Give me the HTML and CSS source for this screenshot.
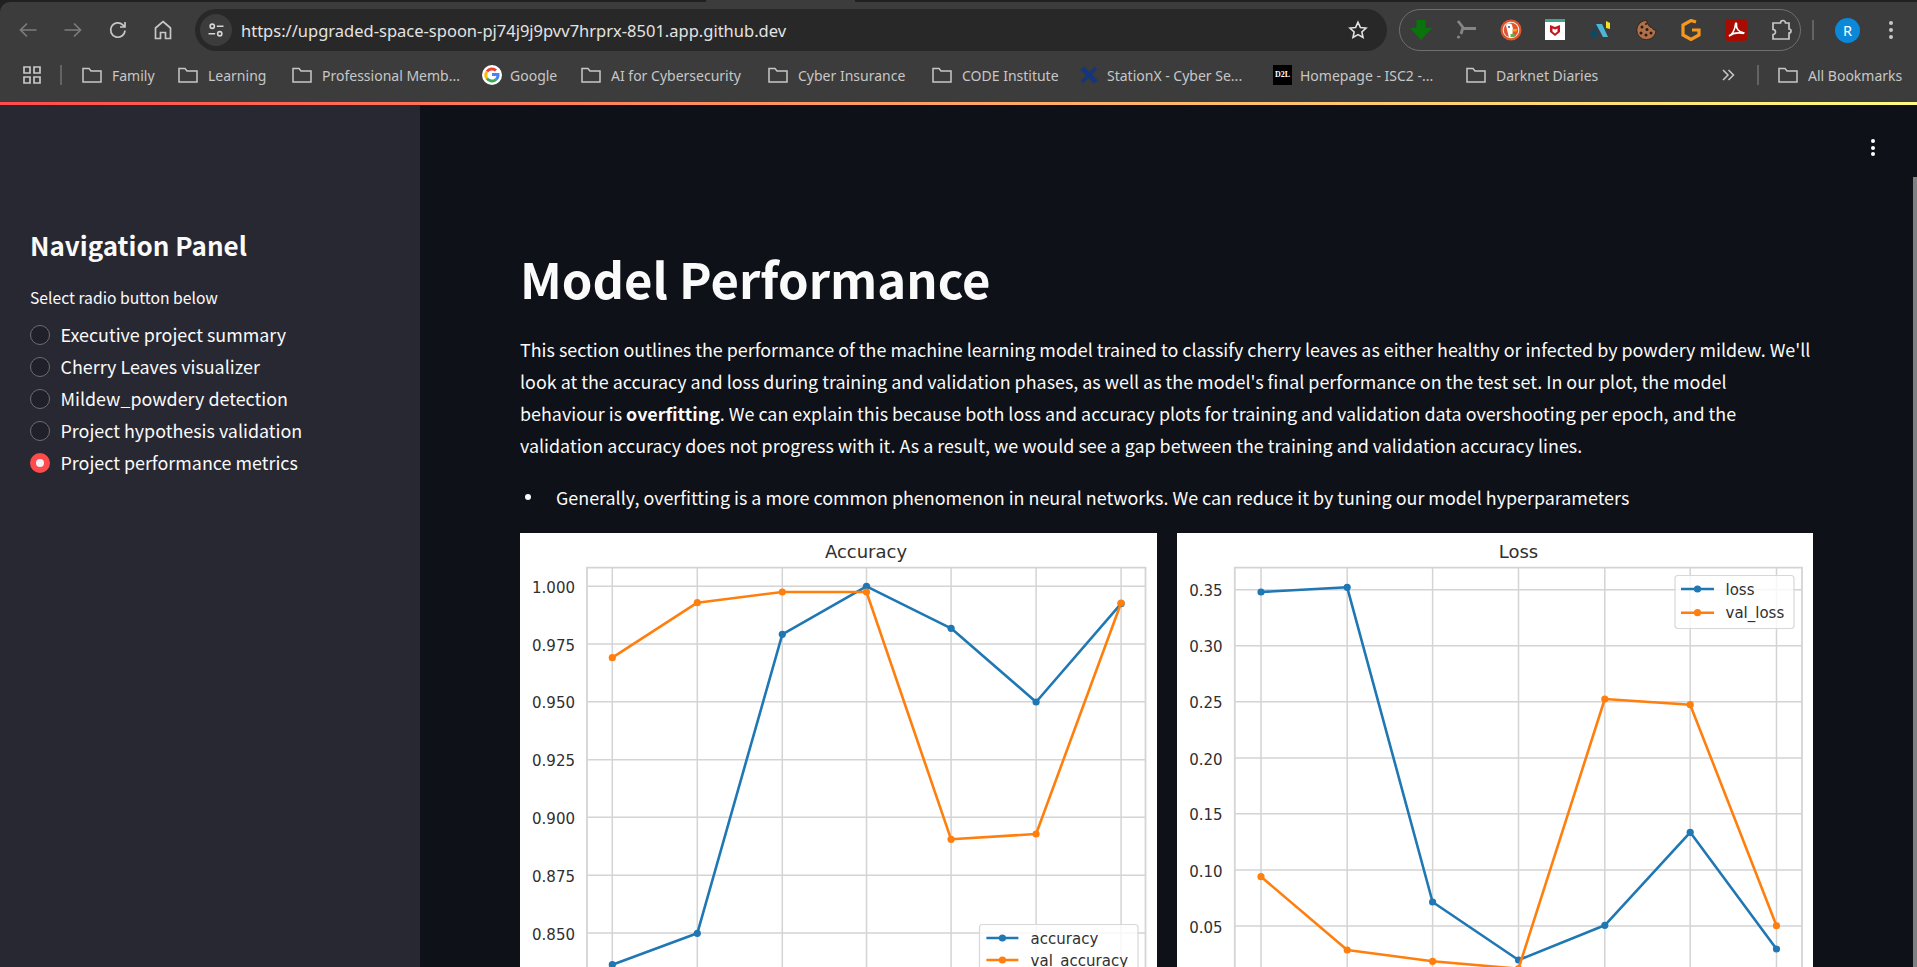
FILE: index.html
```html
<!DOCTYPE html>
<html lang="en">
<head>
	<meta charset="UTF-8">
	<title>Model Performance</title>
	<link rel="stylesheet" href="styles.css">
</head>
<body>
	<svg class="defs" width="0" height="0">
		<defs>
			<marker id="dotBlue" markerUnits="userSpaceOnUse" markerWidth="10" markerHeight="10" refX="5" refY="5"><circle cx="5" cy="5" r="3.6" fill="#1f77b4"/></marker>
			<marker id="dotOrange" markerUnits="userSpaceOnUse" markerWidth="10" markerHeight="10" refX="5" refY="5"><circle cx="5" cy="5" r="3.6" fill="#ff7f0e"/></marker>
		</defs>
	</svg>

	<div class="chrome">
		<div class="toolbar">
			<button class="navBtn dim"><svg viewBox="0 0 24 24"><path d="M20.5 12H4.5M11 5.5 4.5 12l6.5 6.5"/></svg></button>
			<button class="navBtn dim"><svg viewBox="0 0 24 24"><path d="M3.5 12h16M13 5.5l6.5 6.5-6.5 6.5"/></svg></button>
			<button class="navBtn"><svg viewBox="0 0 24 24"><path d="M19 12.5a7.2 7.2 0 1 1-2.2-5.7L19 9M19 4v5h-5"/></svg></button>
			<button class="navBtn"><svg viewBox="0 0 24 24"><path d="M12 3.5 19.5 10v10.5h-5v-6h-5v6h-5V10z"/></svg></button>
			<div class="omnibox">
				<div class="siteInfo"><svg viewBox="0 0 24 24"><circle cx="7.5" cy="7.5" r="2.5"/><path d="M13 7.5h8M3 16.500h8"/><circle cx="16.500" cy="16.500" r="2.500"/></svg></div>
				<div class="url">https://upgraded-space-spoon-pj74j9j9pvv7hrprx-8501.app.github.dev</div>
				<svg class="star" viewBox="0 0 24 24"><path d="M12 3.500l2.600 5.700 6.200.7-4.600 4.200 1.300 6.100-5.500-3.100-5.500 3.100 1.300-6.100-4.600-4.200 6.200-.7z"/></svg>
			</div>
			<div class="extensions">
				<svg viewBox="0 0 22 22"><path fill="#0b730b" d="M6.500 1h9v8H22L11 21 0 9h6.500z"/></svg>
				<svg viewBox="0 0 22 22"><path fill="none" stroke="#858585" stroke-width="2.800" d="M3 2l5 6.500L6 15M7.500 9.500H21"/><circle cx="3.500" cy="18" r="1.600" fill="#858585"/></svg>
				<svg viewBox="0 0 22 22"><circle cx="11" cy="11" r="10.500" fill="#e2562b"/><circle cx="11" cy="11" r="8.300" fill="#f4f4f4"/><circle cx="11" cy="11" r="7.300" fill="#e2562b"/><path fill="#fff" d="M6 6.500C7 4 11 4 12 6l1 4-1 8.500H9z"/><path fill="#f7a21b" d="M12.500 10h5l-1 2.500h-4z"/><path fill="#55b848" d="M10.500 15h4v3h-4z"/><circle cx="9" cy="8" r="1" fill="#2d4f8e"/></svg>
				<svg viewBox="0 0 22 22"><path fill="#fff" d="M0 1h20v20H0z"/><path fill="#3fa58c" d="M0 0h20v3H0z"/><path fill="#c4141c" d="M5 6l5 2 5-2v7l-5 4-5-4z"/><path fill="#fff" d="M7.500 9.500l2.500 1 2.500-1v3l-2.500 2-2.500-2z"/></svg>
				<svg viewBox="0 0 22 22"><circle cx="4" cy="15" r="3.500" fill="#0e4a66"/><path fill="#0e4a66" d="M2 11l5-4v4z"/><path fill="#4eb4d8" d="M6 5h6l6 13h-5z"/><path fill="#f5e020" d="M16 2l4 2v6l-4-1z"/></svg>
				<svg viewBox="0 0 22 22"><path fill="#b0704a" stroke="#2c1c14" stroke-width=".8" d="M12 1.500a9.600 9.600 0 1 0 9 9.500c-2 .5-3.500-.5-3.800-2.500-2 0-3.800-1-3.700-3-1.300 0-2-2-1.500-4z"/><g fill="#2a1a12"><circle cx="7" cy="8" r="1.500"/><circle cx="12" cy="10.500" r="1.500"/><circle cx="6" cy="14" r="1.500"/><circle cx="11" cy="16" r="1.500"/><circle cx="16" cy="14" r="1.500"/><circle cx="11" cy="5" r="1"/></g></svg>
				<svg viewBox="0 0 22 22"><path fill="none" stroke="#f7971e" stroke-width="3.200" d="M16 3l-5-1.500L3 6v10l8 4.500 8-4.500v-5h-7"/></svg>
				<svg viewBox="0 0 22 22"><rect width="22" height="22" rx="3" fill="#a80b00"/><path fill="none" stroke="#fff" stroke-width="1.600" d="M4 17c3-1 6-6 6.500-12 .1-1.500 1.500-1 1 1C11 10 14 13 18 13.500c1.500 0 1 1.200-1 .8C13 13.500 8 14 4 17z"/></svg>
				<svg viewBox="0 0 22 22"><path fill="none" stroke="#c7c7c7" stroke-width="1.700" d="M8 4h2.500a2.500 2.500 0 0 1 5 0H19v6a2 2 0 0 1 0 4v6H3v-4.500a2.500 2.500 0 0 0 0-5V4z"/></svg>
			</div>
			<div class="vsep"></div>
			<div class="avatar">R</div>
			<div class="moreDots"><i></i><i></i><i></i></div>
		</div>

		<div class="bookmarks">
			<div class="bmStart">
				<svg class="bmIcon" viewBox="0 0 20 20"><path fill="none" stroke="#c7c7c7" stroke-width="1.700" d="M2 2h6v6H2zM12 2h6v6h-6zM2 12h6v6H2zM12 12h6v6h-6z"/></svg>
				<div class="vsep"></div>
			</div>
			<div class="bm"><svg class="folder" viewBox="0 0 20 20"><path d="M1 3.500h6l2 2.500h10v11H1z"/></svg><span>Family</span></div>
			<div class="bm"><svg class="folder" viewBox="0 0 20 20"><path d="M1 3.500h6l2 2.500h10v11H1z"/></svg><span>Learning</span></div>
			<div class="bm"><svg class="folder" viewBox="0 0 20 20"><path d="M1 3.500h6l2 2.500h10v11H1z"/></svg><span>Professional Memb...</span></div>
			<div class="bm"><svg class="bmIcon" viewBox="0 0 20 20"><circle cx="10" cy="10" r="10" fill="#fff"/><g fill="none" stroke-width="3"><path stroke="#ea4335" d="M5 6.500a6 6 0 0 1 9-1"/><path stroke="#fbbc05" d="M5 6.500a6 6 0 0 0 0 7"/><path stroke="#34a853" d="M5 13.500a6 6 0 0 0 9 1"/><path stroke="#4285f4" d="M14 14.500a6 6 0 0 0 2-5H10"/></g></svg><span>Google</span></div>
			<div class="bm"><svg class="folder" viewBox="0 0 20 20"><path d="M1 3.500h6l2 2.500h10v11H1z"/></svg><span>AI for Cybersecurity</span></div>
			<div class="bm"><svg class="folder" viewBox="0 0 20 20"><path d="M1 3.500h6l2 2.500h10v11H1z"/></svg><span>Cyber Insurance</span></div>
			<div class="bm"><svg class="folder" viewBox="0 0 20 20"><path d="M1 3.500h6l2 2.500h10v11H1z"/></svg><span>CODE Institute</span></div>
			<div class="bm"><svg class="bmIcon" viewBox="0 0 20 20"><path stroke="#16357f" stroke-width="5" d="M3 3l14 14"/><path stroke="#16357f" stroke-width="3.500" d="M17 3L3 17"/></svg><span>StationX - Cyber Se...</span></div>
			<div class="bm"><div class="d2l">D2L</div><span>Homepage - ISC2 -...</span></div>
			<div class="bm"><svg class="folder" viewBox="0 0 20 20"><path d="M1 3.500h6l2 2.500h10v11H1z"/></svg><span>Darknet Diaries</span></div>
			<div class="bmEnd">
				<svg class="chevrons" viewBox="0 0 14 14"><path d="M2 2l5 5-5 5M7.500 2l5 5-5 5"/></svg>
				<div class="vsep"></div>
				<div class="bm"><svg class="folder" viewBox="0 0 20 20"><path d="M1 3.500h6l2 2.500h10v11H1z"/></svg><span>All Bookmarks</span></div>
			</div>
		</div>
	</div>

	<div class="decoracion"></div>

	<div class="app">
		<div class="sidebar">
			<div class="tituloPanel">Navigation Panel</div>
			<div class="radioLabel">Select radio button below</div>
			<div class="radios">
				<div class="radio"><span class="circulo"></span>Executive project summary</div>
				<div class="radio"><span class="circulo"></span>Cherry Leaves visualizer</div>
				<div class="radio"><span class="circulo"></span>Mildew_powdery detection</div>
				<div class="radio"><span class="circulo"></span>Project hypothesis validation</div>
				<div class="radio"><span class="circulo activo"></span>Project performance metrics</div>
			</div>
		</div>

		<div class="principal">
			<h1>Model Performance</h1>
			<p class="parrafo">This section outlines the performance of the machine learning model trained to classify cherry leaves as either healthy or infected by powdery mildew. We'll look at the accuracy and loss during training and validation phases, as well as the model's final performance on the test set. In our plot, the model behaviour is <b>overfitting</b>. We can explain this because both loss and accuracy plots for training and validation data overshooting per epoch, and the validation accuracy does not progress with it. As a result, we would see a gap between the training and validation accuracy lines.</p>
			<ul class="lista">
				<li>Generally, overfitting is a more common phenomenon in neural networks. We can reduce it by tuning our model hyperparameters</li>
			</ul>
			<div class="graficos">
				<svg class="grafico" viewBox="0 0 637 434">
					<text class="tituloGrafico" x="346" y="25">Accuracy</text>
					<path class="rejilla" d="M92.300 34.700V434M177.300 34.700V434M262.300 34.700V434M346.500 34.700V434M431.100 34.700V434M516.100 34.700V434M601.100 34.700V434M67 53.300H625.500M67 111H625.500M67 168.700H625.500M67 226.700H625.500M67 284.300H625.500M67 342.300H625.500M67 400H625.500"/>
					<path class="marco" d="M67 434V34.700H625.500V434"/>
					<g class="ticks">
						<text x="55" y="60">1.000</text><text x="55" y="117.500">0.975</text><text x="55" y="175">0.950</text><text x="55" y="233">0.925</text><text x="55" y="291">0.900</text><text x="55" y="349">0.875</text><text x="55" y="406.500">0.850</text>
					</g>
					<polyline class="serieAzul" points="92.300,431.700 177.300,400.300 262.300,101.300 346.500,53.300 431.100,95.300 516.100,169 601.100,70.700"/>
					<polyline class="serieNaranja" points="92.300,124.700 177.300,69.700 262.300,59 346.500,59 431.100,306.300 516.100,301 601.100,70"/>
					<rect class="leyenda" x="459.500" y="391.500" width="158.500" height="60" rx="3"/>
					<polyline class="serieAzul manija" points="466.400,405 482.400,405 498.400,405"/>
					<polyline class="serieNaranja manija" points="466.400,427 482.400,427 498.400,427"/>
					<text class="textoLeyenda" x="510.600" y="411">accuracy</text>
					<text class="textoLeyenda" x="510.600" y="433">val_accuracy</text>
				</svg>
				<svg class="grafico" viewBox="0 0 636 434">
					<text class="tituloGrafico" x="341.500" y="25">Loss</text>
					<path class="rejilla" d="M84 34.700V434M170.200 34.700V434M255.600 34.700V434M341.500 34.700V434M427.800 34.700V434M513.200 34.700V434M599.500 34.700V434M57.800 56.700H625M57.800 112.700H625M57.800 168.700H625M57.800 225H625M57.800 280.700H625M57.800 337H625M57.800 393H625"/>
					<path class="marco" d="M57.800 434V34.700H625V434"/>
					<g class="ticks">
						<text x="45.600" y="63">0.35</text><text x="45.600" y="119">0.30</text><text x="45.600" y="175">0.25</text><text x="45.600" y="231.500">0.20</text><text x="45.600" y="287">0.15</text><text x="45.600" y="343.500">0.10</text><text x="45.600" y="399.500">0.05</text>
					</g>
					<polyline class="serieAzul" points="84,59 170.200,54.300 255.600,369 341.500,427 427.800,392.300 513.200,299.300 599.500,416"/>
					<polyline class="serieNaranja" points="84,343.700 170.200,417 255.600,428.300 341.500,435.700 427.800,166 513.200,171.700 599.500,392.700"/>
					<rect class="leyenda" x="498" y="42.500" width="119" height="53" rx="3"/>
					<polyline class="serieAzul manija" points="504,56 520.500,56 537,56"/>
					<polyline class="serieNaranja manija" points="504,79.700 520.500,79.700 537,79.700"/>
					<text class="textoLeyenda" x="548.500" y="62">loss</text>
					<text class="textoLeyenda" x="548.500" y="85">val_loss</text>
				</svg>
			</div>
		</div>
	</div>

	<div class="menuApp"><i></i><i></i><i></i></div>
	<div class="scrollbar"></div>
</body>
</html>
```

FILE: styles.css
```css
html, body {
	margin: 0;
	height: 100%;
	overflow: hidden;
	background: #0e1117;
}
body {
	display: flex;
	flex-direction: column;
	font-family: "Noto Sans CJK SC", "Noto Sans", sans-serif;
	color: #fafafa;
}
svg.defs {
	position: absolute;
}

/* barra del navegador */
.chrome {
	flex: none;
	height: 102px;
	box-sizing: border-box;
	padding-top: 2px;
	background: linear-gradient(90deg, #202020 706px, #3c3c3c 706px, #3c3c3c 855px, #202020 855px) top / 100% 2px no-repeat, #202020;
	font-family: "Noto Sans", sans-serif;
}
.toolbar {
	display: flex;
	align-items: center;
	height: 56px;
	box-sizing: border-box;
	padding: 0 0 0 5px;
	background: #3c3c3c;
	border-radius: 10px 0 0 0;
}
.navBtn {
	flex: none;
	width: 45px;
	height: 40px;
	margin: 0;
	padding: 0;
	border: 0;
	background: none;
}
.navBtn svg {
	display: block;
	width: 24px;
	height: 24px;
	margin: 0 auto;
	fill: none;
	stroke: #c7c7c7;
	stroke-width: 1.7;
}
.navBtn.dim svg {
	stroke: #7c7c7c;
}
.omnibox {
	flex: none;
	display: flex;
	align-items: center;
	width: 1192px;
	height: 42px;
	margin-left: 10px;
	box-sizing: border-box;
	padding: 0 18px 0 5px;
	background: #282828;
	border-radius: 21px;
}
.siteInfo {
	flex: none;
	display: flex;
	align-items: center;
	justify-content: center;
	width: 32px;
	height: 32px;
	background: #3c3c3c;
	border-radius: 50%;
}
.siteInfo svg {
	width: 20px;
	height: 20px;
	fill: none;
	stroke: #d6d6d6;
	stroke-width: 2;
}
.url {
	flex: 1;
	margin-left: 9px;
	font-size: 16.500px;
	color: #e3e3e3;
	white-space: nowrap;
}
.star {
	flex: none;
	width: 22px;
	height: 22px;
	fill: none;
	stroke: #e3e3e3;
	stroke-width: 1.7;
}
.extensions {
	flex: none;
	display: flex;
	align-items: center;
	gap: 23px;
	width: 402px;
	height: 42px;
	margin-left: 12px;
	box-sizing: border-box;
	padding: 0 0 0 10px;
	border: 1.5px solid #6f6f6f;
	border-radius: 21px;
}
.extensions svg {
	flex: none;
	width: 22px;
	height: 22px;
}
.vsep {
	flex: none;
	width: 2px;
	height: 20px;
	background: #636363;
}
.toolbar .vsep {
	margin-left: 11px;
}
.avatar {
	flex: none;
	width: 25px;
	height: 25px;
	margin-left: 21px;
	background: #0b88d8;
	border-radius: 50%;
	font-size: 14.500px;
	line-height: 25px;
	text-align: center;
	color: #fff;
}
.moreDots {
	flex: none;
	display: flex;
	flex-direction: column;
	gap: 3px;
	margin-left: 29px;
}
.moreDots i {
	display: block;
	width: 4px;
	height: 4px;
	background: #c7c7c7;
	border-radius: 50%;
}

/* marcadores */
.bookmarks {
	display: grid;
	grid-template-columns: 82px 96px 114px 190px 99px 187px 164px 147px 194px 193px 255px 1fr;
	align-items: center;
	height: 44px;
	box-sizing: border-box;
	padding-bottom: 10px;
	background: #3c3c3c;
	font-size: 14px;
	color: #c7c7c7;
}
.bm {
	display: flex;
	align-items: center;
	white-space: nowrap;
}
.folder {
	flex: none;
	width: 20px;
	height: 20px;
	margin-right: 10px;
	fill: none;
	stroke: #c7c7c7;
	stroke-width: 1.500;
}
.bmIcon {
	flex: none;
	width: 20px;
	height: 20px;
	margin-right: 8px;
}
.bmStart {
	display: flex;
	align-items: center;
	padding-left: 22px;
}
.bmStart .bmIcon {
	margin: 0 18px 0 0;
}
.d2l {
	flex: none;
	width: 19px;
	height: 20px;
	margin-right: 8px;
	background: #000;
	font: bold 8px/20px "Liberation Serif", serif;
	text-align: center;
	color: #fff;
}
.bmEnd {
	display: flex;
	align-items: center;
}
.chevrons {
	flex: none;
	width: 14px;
	height: 14px;
	margin-right: 22px;
	fill: none;
	stroke: #c7c7c7;
	stroke-width: 1.500;
}
.bmEnd .vsep {
	margin-right: 19px;
}

.decoracion {
	flex: none;
	height: 3px;
	background: linear-gradient(90deg, #ff4b4b, #fffd80);
}

/* aplicacion */
.app {
	flex: 1;
	display: flex;
	min-height: 0;
}
.sidebar {
	flex: none;
	width: 420px;
	box-sizing: border-box;
	padding: 122px 30px 0;
	background: #282832;
}
.tituloPanel {
	font-size: 26px;
	font-weight: 600;
	line-height: 36px;
}
.radioLabel {
	margin-top: 24px;
	font-size: 15.700px;
	line-height: 22px;
}
.radios {
	margin-top: 9px;
}
.radio {
	display: flex;
	align-items: center;
	height: 32px;
	font-size: 17.900px;
}
.circulo {
	flex: none;
	width: 20px;
	height: 20px;
	margin: 2px 10.500px 0 0;
	box-sizing: border-box;
	background: #1f2029;
	border: 1px solid #6b6c74;
	border-radius: 50%;
}
.circulo.activo {
	background: #f0f2f6;
	border: 6px solid #ff4b4b;
}
.principal {
	flex: 1;
	min-width: 0;
	box-sizing: border-box;
	padding: 141px 104px 0 100px;
}
h1 {
	margin: 0;
	font-size: 49px;
	font-weight: 700;
	line-height: 64px;
}
.parrafo {
	margin: 23px 0 0;
	font-size: 17.900px;
	line-height: 32px;
}
.lista {
	margin: 20px 0 0;
	padding: 0 0 0 5px;
	list-style: none;
	font-size: 17.900px;
	line-height: 32px;
}
.lista li {
	display: flex;
	align-items: center;
}
.lista li::before {
	content: "";
	flex: none;
	width: 6px;
	height: 6px;
	margin-right: 25px;
	background: #fafafa;
	border-radius: 50%;
}
.graficos {
	display: flex;
	gap: 20px;
	margin-top: 20px;
}
.grafico {
	display: block;
	flex: none;
	width: 637px;
	height: 434px;
	background: #fff;
}
.grafico + .grafico {
	width: 636px;
}
.grafico text {
	font-family: "DejaVu Sans", sans-serif;
	fill: #303030;
}
.tituloGrafico {
	font-size: 18px;
	text-anchor: middle;
}
.ticks text {
	font-size: 15px;
	text-anchor: end;
}
.textoLeyenda {
	font-size: 15px;
}
.rejilla, .marco {
	fill: none;
	stroke: #d4d4d4;
	stroke-width: 1.500;
}
.marco {
	stroke-width: 1.800;
}
.serieAzul, .serieNaranja {
	fill: none;
	stroke-width: 2.600;
	stroke-linejoin: round;
}
.serieAzul {
	stroke: #1f77b4;
	marker: url(#dotBlue);
}
.serieNaranja {
	stroke: #ff7f0e;
	marker: url(#dotOrange);
}
.manija {
	marker-start: none;
	marker-end: none;
}
.leyenda {
	fill: #fff;
	fill-opacity: .8;
	stroke: #d8d8d8;
	stroke-width: 1.200;
}

/* lo que flota sobre la pagina */
.menuApp {
	position: absolute;
	top: 139px;
	left: 1870.500px;
	display: flex;
	flex-direction: column;
	gap: 2.500px;
}
.menuApp i {
	display: block;
	width: 4px;
	height: 4px;
	background: #fff;
	border-radius: 50%;
}
.scrollbar {
	position: absolute;
	top: 177px;
	right: 0;
	bottom: 0;
	width: 4px;
	background: #808080;
}
```
